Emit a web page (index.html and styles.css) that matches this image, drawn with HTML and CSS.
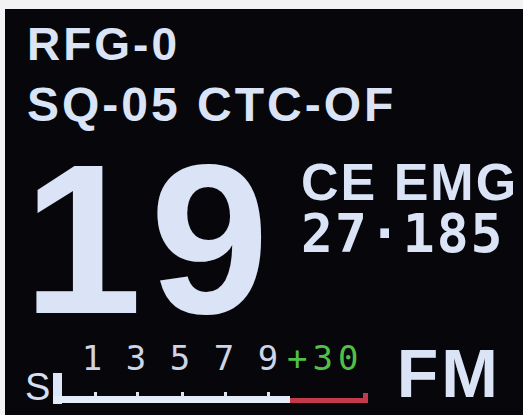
FILE: index.html
```html
<!DOCTYPE html>
<html>
<head>
<meta charset="utf-8">
<link rel="stylesheet" href="styles.css">
</head>
<body>
<div class="screen">
  <div class="l1">RFG-0</div>
  <div class="l2">SQ-05 CTC-OF</div>
  <div class="main">
    <div class="big">19</div>
    <div class="side">
      <div class="mode">CE EMG</div>
      <div class="freq">27·185</div>
    </div>
  </div>
  <div class="bottom">
    <div class="meter">
      <div class="nums">
        <span class="n">1</span><span class="n">3</span><span class="n">5</span><span class="n">7</span><span class="n">9</span><span class="plus">+30</span>
      </div>
      <div class="bar">
        <span class="s">S</span>
        <svg class="gauge" width="320" height="34" viewBox="0 0 320 34">
          <rect x="3" y="1" width="9" height="31" fill="#dde6f6"/>
          <rect x="3" y="24" width="237" height="7" fill="#e4ecf8"/>
          <rect x="44" y="20" width="3" height="5" fill="#dde6f6"/>
          <rect x="86" y="20" width="3" height="5" fill="#dde6f6"/>
          <rect x="131" y="20" width="3" height="5" fill="#dde6f6"/>
          <rect x="174" y="20" width="3" height="5" fill="#dde6f6"/>
          <rect x="217" y="20" width="3" height="5" fill="#dde6f6"/>
          <rect x="240" y="26" width="78" height="5" fill="#c23a4c"/>
          <rect x="313" y="21" width="5" height="10" fill="#c23a4c"/>
        </svg>
      </div>
    </div>
    <div class="fm">FM</div>
  </div>
</div>
</body>
</html>
```

FILE: styles.css
```css
html, body {
  margin: 0;
  padding: 0;
  background: #f3f3f3;
}
body {
  width: 523px;
  height: 415px;
  overflow: hidden;
}
.screen {
  margin: 9px 0 0 5px;
  height: 406px;
  background: #07070b;
  padding: 0 22px 0 22px;
  box-sizing: border-box;
  color: #dae4f6;
  font-family: "Liberation Sans", Arial, sans-serif;
  font-weight: 700;
  overflow: hidden;
}
.l1 {
  font-size: 46px;
  line-height: 46px;
  letter-spacing: 3px;
  margin-top: 12px;
  white-space: nowrap;
}
.l2 {
  font-size: 48px;
  line-height: 48px;
  letter-spacing: 3px;
  margin-top: 14px;
  white-space: nowrap;
}
.main {
  display: flex;
  margin-top: 30px;
  height: 160px;
}
.big {
  font-size: 214px;
  line-height: 160px;
  letter-spacing: 8px;
  width: 276px;
  flex-shrink: 0;
  margin-left: -4px;
  white-space: nowrap;
}
.side {
  display: flex;
  flex-direction: column;
  margin-top: -3px;
  margin-left: 2px;
}
.mode {
  font-size: 52px;
  line-height: 52px;
  letter-spacing: 2px;
  white-space: nowrap;
}
.freq {
  font-family: "DejaVu Sans Mono", monospace;
  font-size: 53px;
  line-height: 53px;
  letter-spacing: 2px;
  margin-top: -1px;
  white-space: nowrap;
}
.bottom {
  display: flex;
  justify-content: space-between;
  align-items: flex-start;
  margin-top: 24px;
}
.meter {
  margin-left: -2px;
  display: flex;
  flex-direction: column;
}
.nums {
  display: flex;
  padding-left: 45px;
  font-family: "DejaVu Sans Mono", monospace;
  font-weight: 400;
  font-size: 34px;
  line-height: 30px;
  height: 30px;
  color: #cdd5e6;
}
.n {
  width: 44px;
  text-align: center;
}
.plus {
  color: #52c046;
  letter-spacing: 5px;
  margin-left: -3px;
}
.bar {
  display: flex;
  align-items: flex-start;
}
.s {
  font-family: "Liberation Sans", Arial, sans-serif;
  font-weight: 400;
  font-size: 38px;
  line-height: 38px;
  margin-top: -5px;
  width: 25px;
  color: #d6def0;
}
.gauge {
  display: block;
  margin-top: -1px;
}
.fm {
  font-size: 68px;
  line-height: 68px;
  letter-spacing: 3px;
  margin-top: -4px;
}
```
